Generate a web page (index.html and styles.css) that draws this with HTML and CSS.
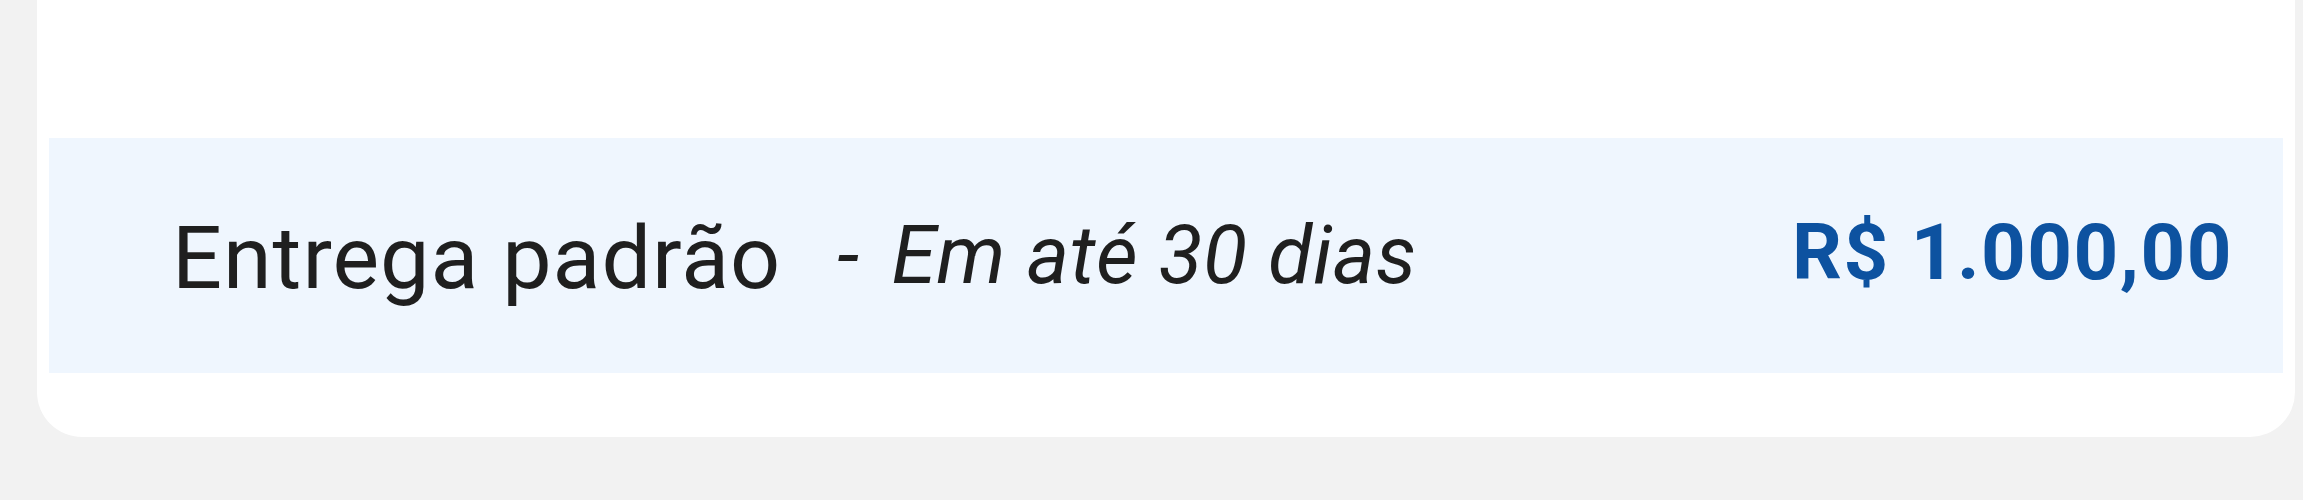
FILE: index.html
```html
<!DOCTYPE html>
<html lang="pt-BR">
<head>
    <meta charset="UTF-8">
    <meta name="viewport" content="width=device-width, initial-scale=1.0">
    <title>Entrega</title>
    <link rel="stylesheet" href="styles.css">
</head>
<body>
    <div class="card">
        <div class="shipping-option">
            <div class="shipping-name">
                <span class="label">Entrega padrão</span>
                <span class="deadline"><span class="separator">-</span>Em até 30 dias</span>
            </div>
            <span class="price">R$ 1.000,00</span>
        </div>
    </div>
</body>
</html>
```

FILE: styles.css
```css
body {
    margin: 0;
    background-color: #f2f2f2;
    font-family: Roboto, "Liberation Sans", sans-serif;
    height: 500px;
    overflow: hidden;
}
.card {
    margin-left: 37px;
    width: 2258px;
    box-sizing: border-box;
    padding: 138px 12px 64px;
    background-color: #fff;
    border-radius: 0 0 45px 45px;
}
.shipping-option {
    height: 235px;
    display: flex;
    align-items: center;
    justify-content: space-between;
    padding: 0 50px 0 123px;
    background-color: #eff6fe;
}
.shipping-name {
    display: flex;
    align-items: center;
    gap: 56px;
}
.label {
    font-size: 88px;
    letter-spacing: 1px;
    color: #1f1f1f;
    margin-top: 4px;
}
.deadline {
    font-size: 81px;
    letter-spacing: 0.5px;
    font-style: italic;
    color: #1f1f1f;
}
.separator {
    margin-right: 32px;
}
.price {
    font-size: 78px;
    font-weight: 700;
    letter-spacing: 1.5px;
    color: #0d52a0;
    margin-bottom: 6px;
}
```
